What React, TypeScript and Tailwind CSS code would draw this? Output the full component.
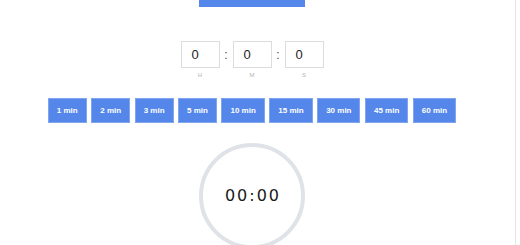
import React from "react";

const presets = ["1 min", "2 min", "3 min", "5 min", "10 min", "15 min", "30 min", "45 min", "60 min"];

function TimeBox({ label }: { label: string }) {
  return (
    <div className="flex flex-col items-center">
      <div className="w-[39px] h-[27px] border border-[#dcdcdc] bg-white flex items-center pl-[10px] text-[13px] text-[#222]">0</div>
      <div className="mt-[3px] text-[6px] leading-[8px] text-[#b5b5b5]">{label}</div>
    </div>
  );
}

function Colon() {
  return <div className="w-[13px] h-[27px] flex items-center justify-center text-[12px] text-[#444]">:</div>;
}

export default function App() {
  return (
    <div className="flex w-[520px] h-[245px] overflow-hidden bg-white" style={{ fontFamily: '"Liberation Sans", Arial, sans-serif' }}>
      <div className="w-[504px] flex flex-col items-center">
        <div className="w-[106px] h-[7px] shrink-0 bg-[#5587ea]" />
        <div className="mt-[34px] flex items-start">
          <TimeBox label="H" />
          <Colon />
          <TimeBox label="M" />
          <Colon />
          <TimeBox label="S" />
        </div>
        <div className="mt-[19px] flex gap-[4.5px]">
          {presets.map((p) => (
            <div key={p} className="h-[25px] px-[8px] border border-[#7fa5ef] bg-[#5587ea] text-white text-[8px] font-bold flex items-center justify-center">
              {p}
            </div>
          ))}
        </div>
        <div className="mt-[20px] w-[106px] h-[106px] shrink-0 rounded-full border-[4px] border-[#dfe2e7] flex items-center justify-center">
          <span className="text-[18px] tracking-[2px] font-medium text-[#1a1a1a] pl-[2px]" style={{ fontFamily: '"DejaVu Sans", sans-serif', fontSize: 16 }}>00:00</span>
        </div>
      </div>
      <div className="w-[11px]" />
      <div className="w-px h-[245px] bg-[#e6e6e6]" />
    </div>
  );
}
